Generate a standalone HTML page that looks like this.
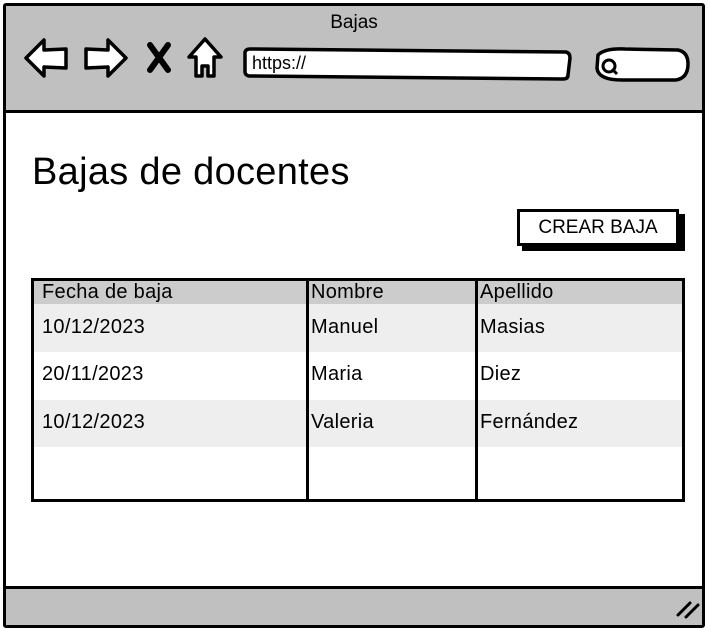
<!DOCTYPE html>
<html><head><style>
*{margin:0;padding:0;box-sizing:border-box}
body{width:708px;height:630px;background:#fff;font-family:"Liberation Sans",sans-serif;position:relative;overflow:hidden}
.a{position:absolute}
</style></head><body>
<div class="a" style="left:3px;top:3px;width:702px;height:625px;border:3px solid #000;border-radius:3px;background:#fff"></div>
<div class="a" style="left:6px;top:6px;width:696px;height:107px;background:#c0c0c0;border-bottom:3px solid #000"></div>
<div class="a" style="left:6px;top:586px;width:696px;height:39px;background:#c0c0c0;border-top:3px solid #000"></div>
<div class="a" style="left:0;width:708px;top:12px;text-align:center;font-size:19px">Bajas</div>
<svg class="a" style="left:0;top:0" width="708" height="630">
<g fill="#fff" stroke="#000" stroke-width="3.5" stroke-linejoin="round">
<path d="M26 58 L44 40 L44 50 L66 49 L66 68 L44 67 L44 76 Z"/>
<path d="M126 58 L108 40 L108 50 L86 49 L86 68 L108 67 L108 76 Z"/>
<path d="M205 39 L221 57 L214 57 L214 76 L208 76 L208 66 L202 66 L202 76 L196 76 L196 57 L189 57 Z"/>
<path d="M245 52 Q246 49 250 49 L566 52 Q570 53 570 58 L568 75 Q568 79 563 79 L249 76 Q245 75 245 72 Z"/>
<path d="M598 55 Q605 48 625 49 L678 50 Q688 52 688 64 Q688 78 676 80 L622 80 Q598 80 597 68 Z"/>
</g>
<path d="M150 45 L168 70 M168 45 L150 70" stroke="#000" stroke-width="6" stroke-linecap="round"/>
<circle cx="609" cy="66" r="6" fill="none" stroke="#000" stroke-width="3"/>
<path d="M612 69 L617 74" stroke="#000" stroke-width="3"/>
<path d="M678 615 L690 603 M686 617 L698 605" stroke="#000" stroke-width="3" stroke-linecap="round"/>
</svg>
<div class="a" style="left:252px;top:53px;font-size:18px">https://</div>
<div class="a" style="left:32px;top:151px;font-size:38px;letter-spacing:0.3px">Bajas de docentes</div>
<div class="a" style="left:522px;top:214px;width:163px;height:37px;background:#000"></div>
<div class="a" style="left:517px;top:209px;width:162px;height:37px;background:#fff;border:3px solid #000;font-size:19px;text-align:center;line-height:31px">CREAR BAJA</div>
<div class="a" style="left:31px;top:278px;width:654px;height:224px;border:3px solid #000;overflow:hidden;font-size:20px;letter-spacing:0.3px">
<div class="a" style="left:0;top:0;width:100%;height:23px;background:#ccc"></div>
<div class="a" style="left:0;top:23px;width:100%;height:48px;background:#eee"></div>
<div class="a" style="left:0;top:119px;width:100%;height:47px;background:#eee"></div>
<div class="a" style="left:272px;top:0;width:3px;height:100%;background:#000"></div>
<div class="a" style="left:441px;top:0;width:3px;height:100%;background:#000"></div>
<div class="a" style="left:8px;top:0px">Fecha de baja</div>
<div class="a" style="left:277px;top:0px">Nombre</div>
<div class="a" style="left:446px;top:0px">Apellido</div>
<div class="a" style="left:8px;top:35px">10/12/2023</div>
<div class="a" style="left:277px;top:35px">Manuel</div>
<div class="a" style="left:446px;top:35px">Masias</div>
<div class="a" style="left:8px;top:82px">20/11/2023</div>
<div class="a" style="left:277px;top:82px">Maria</div>
<div class="a" style="left:446px;top:82px">Diez</div>
<div class="a" style="left:8px;top:130px">10/12/2023</div>
<div class="a" style="left:277px;top:130px">Valeria</div>
<div class="a" style="left:446px;top:130px">Fernández</div>
</div>
</body></html>
